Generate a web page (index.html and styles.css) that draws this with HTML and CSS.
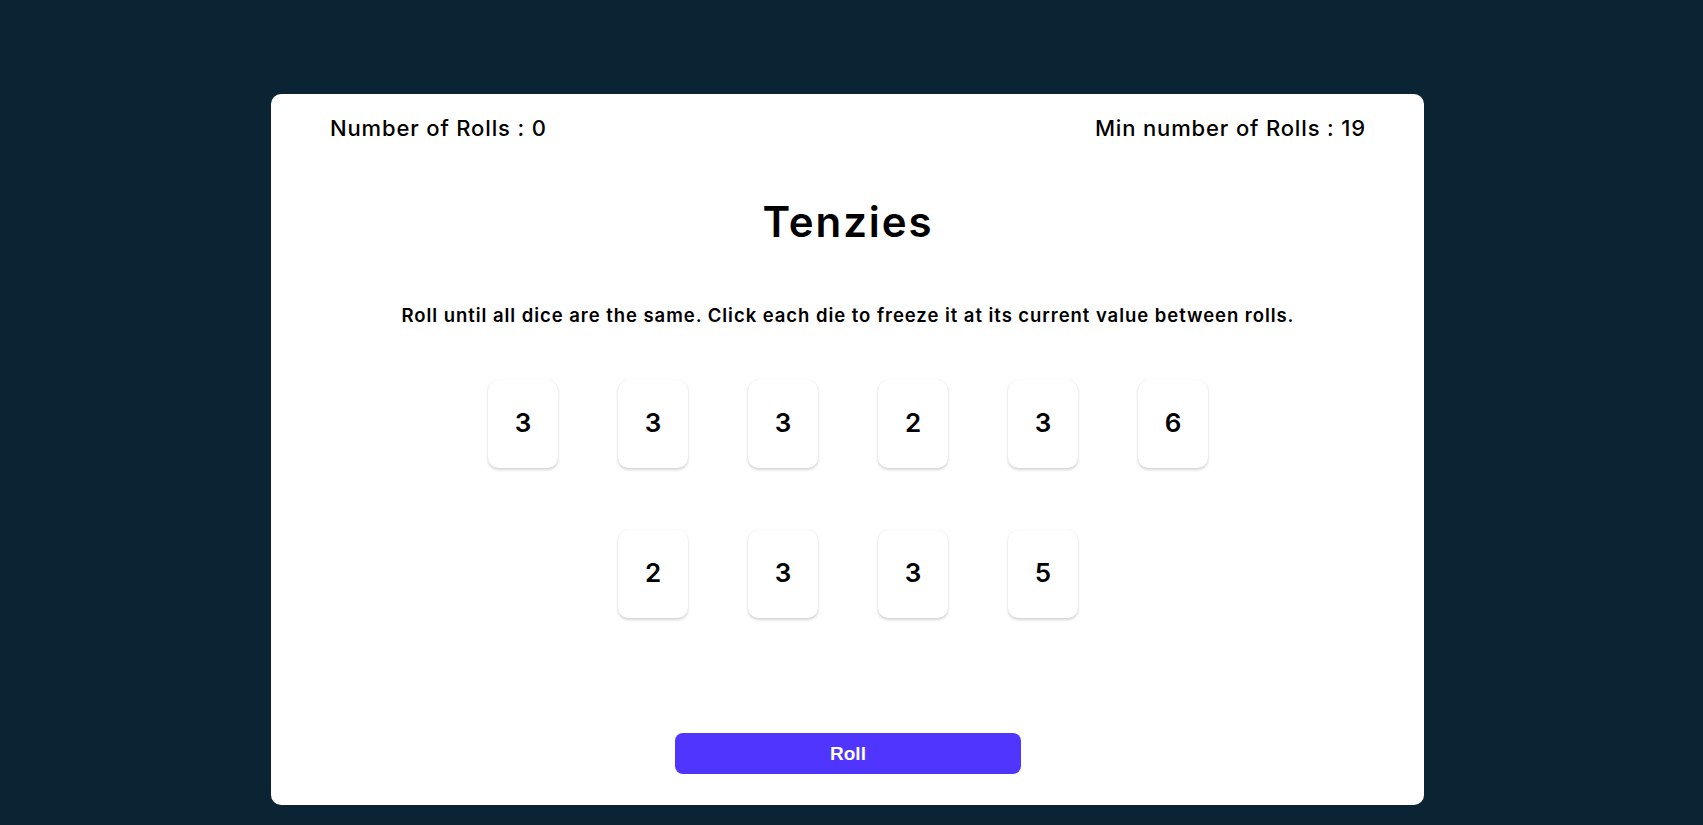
FILE: index.html
```html
<!DOCTYPE html>
<html lang="en">
<head>
<meta charset="utf-8">
<title>Tenzies</title>
<link rel="stylesheet" href="styles.css">
</head>
<body>
<main class="board">
  <header class="stats">
    <span class="stat">Number of Rolls : 0</span>
    <span class="stat">Min number of Rolls : 19</span>
  </header>
  <h1 class="title">Tenzies</h1>
  <p class="instructions">Roll until all dice are the same. Click each die to freeze it at its current value between rolls.</p>
  <div class="dice">
    <button class="die">3</button>
    <button class="die">3</button>
    <button class="die">3</button>
    <button class="die">2</button>
    <button class="die">3</button>
    <button class="die">6</button>
    <button class="die">2</button>
    <button class="die">3</button>
    <button class="die">3</button>
    <button class="die">5</button>
  </div>
  <button class="roll">Roll</button>
</main>
</body>
</html>
```
FILE: styles.css
```css
* { box-sizing: border-box; }
html, body { margin: 0; padding: 0; }
body {
  background: #0B2434;
  min-height: 825px;
  padding: 94px 0 20px 271px;
  font-family: "Inter", "Liberation Sans", sans-serif;
  color: #000;
}
.board {
  width: 1153px;
  height: 711px;
  background: #fff;
  border-radius: 10px;
  padding: 21px 58px 31px 59px;
  display: flex;
  flex-direction: column;
  align-items: center;
}
.stats {
  width: 100%;
  display: flex;
  justify-content: space-between;
  font-size: 22px;
  line-height: 26px;
  font-weight: 500;
  letter-spacing: 0.85px;
}
.title {
  margin: 56px 0 0;
  font-size: 42px;
  line-height: 50px;
  font-weight: 600;
  letter-spacing: 1.9px;
}
.instructions {
  margin: 56px 0 0;
  font-size: 18.5px;
  line-height: 24px;
  font-weight: 600;
  letter-spacing: 0.95px;
}
.dice {
  margin-top: 53px;
  width: 780px;
  display: flex;
  flex-wrap: wrap;
  justify-content: center;
  column-gap: 60px;
  row-gap: 62px;
}
.die {
  width: 70px;
  height: 88px;
  border: none;
  border-radius: 10px;
  background: #fff;
  box-shadow: 0 2px 3px rgba(0, 0, 0, 0.16), 0 0 1px rgba(0, 0, 0, 0.12);
  font-family: "Inter", "Liberation Sans", sans-serif;
  font-size: 26px;
  font-weight: 600;
  color: #000;
  padding: 0 0 4px;
}
.roll {
  margin-top: auto;
  width: 346px;
  height: 41px;
  border: none;
  border-radius: 8px;
  background: #5035FF;
  color: #fff;
  font-family: "Liberation Sans", Arial, sans-serif;
  font-size: 19px;
  font-weight: 700;
}
```
